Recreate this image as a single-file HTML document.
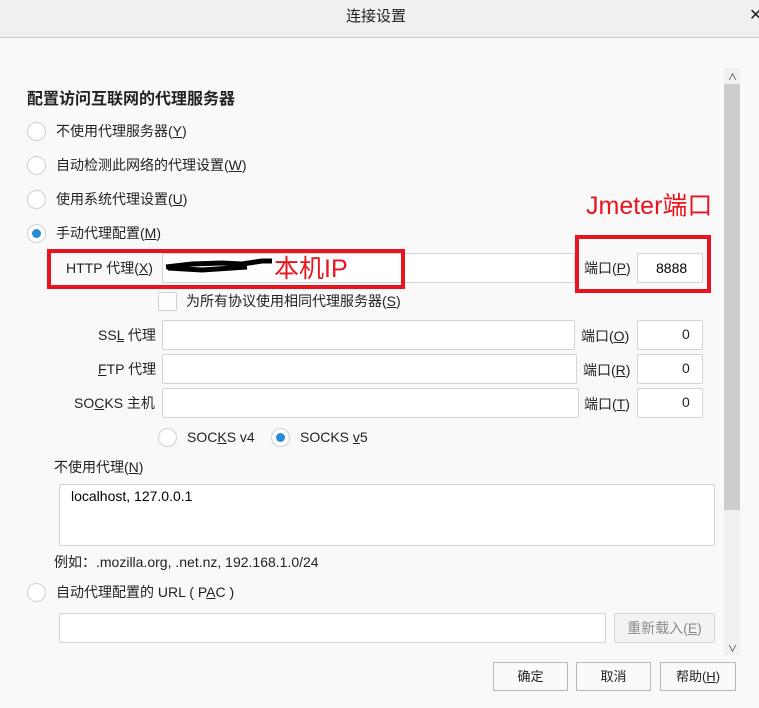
<!DOCTYPE html>
<html><head><meta charset="utf-8"><style>
*{box-sizing:border-box;margin:0;padding:0}
body{width:759px;height:708px;background:#f9f9fa;font-family:"Liberation Sans","Noto Sans CJK SC",sans-serif;font-size:14px;color:#222;position:relative;overflow:hidden}
.a{position:absolute;white-space:nowrap}
.title{left:0;top:0;width:759px;height:38px;background:#f0f0f0;border-bottom:1px solid #c8c8c8}
.r{position:absolute;width:19px;height:19px;border:1px solid #cfcfd8;border-radius:50%;background:#fff}
.r.on::after{content:"";position:absolute;left:4px;top:4px;width:9px;height:9px;border-radius:50%;background:#2a8ad4}
.in{position:absolute;background:#fff;border:1px solid #d4d4d8;border-radius:2px}
.t{position:absolute;white-space:nowrap;line-height:18px}
.red{position:absolute;border:4px solid #e8141e}
.btn{position:absolute;border:1px solid #b8b8b8;background:#fafafa;text-align:center;line-height:27px;font-size:13px}
u{text-decoration:underline}
</style></head><body>
<div class="a title"></div>
<div class="t" style="left:346px;top:8px;font-size:15px">连接设置</div>
<div class="t" style="left:749px;top:7px;font-size:16px">✕</div>

<div style="position:absolute;left:724px;top:68px;width:16px;height:587px;background:#f0f0f0"></div>
<div style="position:absolute;left:724px;top:84px;width:16px;height:426px;background:#cdcdcd"></div>
<div class="t" style="left:728px;top:68px;font-size:9px">∧</div>
<div class="t" style="left:728px;top:640px;font-size:9px">∨</div>

<div class="t" style="left:27px;top:91px;font-size:16px;font-weight:bold">配置访问互联网的代理服务器</div>

<div class="r" style="left:27px;top:122px"></div><div class="t" style="left:56px;top:122px">不使用代理服务器(<u>Y</u>)</div>
<div class="r" style="left:27px;top:156px"></div><div class="t" style="left:56px;top:156px">自动检测此网络的代理设置(<u>W</u>)</div>
<div class="r" style="left:27px;top:190px"></div><div class="t" style="left:56px;top:190px">使用系统代理设置(<u>U</u>)</div>
<div class="r on" style="left:27px;top:224px"></div><div class="t" style="left:56px;top:224px">手动代理配置(<u>M</u>)</div>

<div class="t" style="left:66px;top:259px">HTTP 代理(<u>X</u>)</div>
<div class="in" style="left:162px;top:253px;width:413px;height:30px"></div>
<svg class="a" style="left:162px;top:258px" width="115" height="20"><path d="M4 9 L30 6 L60 5 L80 6 L100 3 L110 3 M6 10 L40 12 L70 10 L85 9" stroke="#000" stroke-width="5" fill="none"/></svg>
<div class="t" style="left:274px;top:254px;font-size:25px;line-height:30px;color:#e8141e">本机IP</div>
<div class="red" style="left:47px;top:249px;width:358px;height:40px"></div>
<div class="t" style="left:584px;top:259px">端口(<u>P</u>)</div>
<div class="in" style="left:637px;top:253px;width:66px;height:30px"></div>
<div class="t" style="left:656px;top:259px;color:#000">8888</div>
<div class="red" style="left:575px;top:235px;width:136px;height:58px"></div>
<div class="t" style="left:586px;top:190px;font-size:25px;line-height:32px;color:#e8141e">Jmeter端口</div>

<div class="in" style="left:158px;top:292px;width:19px;height:19px;border-color:#cfcfd8"></div>
<div class="t" style="left:186px;top:292px">为所有协议使用相同代理服务器(<u>S</u>)</div>

<div class="t" style="left:98px;top:326px">SS<u>L</u> 代理</div>
<div class="in" style="left:162px;top:320px;width:413px;height:30px"></div>
<div class="t" style="left:581px;top:327px">端口(<u>O</u>)</div>
<div class="in" style="left:637px;top:320px;width:66px;height:30px"></div>
<div class="t" style="left:682px;top:325px">0</div>

<div class="t" style="left:98px;top:360px"><u>F</u>TP 代理</div>
<div class="in" style="left:162px;top:354px;width:415px;height:30px"></div>
<div class="t" style="left:583px;top:361px">端口(<u>R</u>)</div>
<div class="in" style="left:637px;top:354px;width:66px;height:30px"></div>
<div class="t" style="left:682px;top:359px">0</div>

<div class="t" style="left:74px;top:394px">SO<u>C</u>KS 主机</div>
<div class="in" style="left:162px;top:388px;width:417px;height:30px"></div>
<div class="t" style="left:584px;top:395px">端口(<u>T</u>)</div>
<div class="in" style="left:637px;top:388px;width:66px;height:30px"></div>
<div class="t" style="left:682px;top:393px">0</div>

<div class="r" style="left:158px;top:428px"></div><div class="t" style="left:187px;top:428px">SOC<u>K</u>S v4</div>
<div class="r on" style="left:271px;top:428px"></div><div class="t" style="left:300px;top:428px">SOCKS <u>v</u>5</div>

<div class="t" style="left:54px;top:458px">不使用代理(<u>N</u>)</div>
<div class="in" style="left:59px;top:484px;width:656px;height:62px"></div>
<div class="t" style="left:71px;top:487px;color:#000">localhost, 127.0.0.1</div>
<div class="t" style="left:54px;top:553px">例如：.mozilla.org, .net.nz, 192.168.1.0/24</div>

<div class="r" style="left:27px;top:583px"></div><div class="t" style="left:56px;top:583px">自动代理配置的 URL ( P<u>A</u>C )</div>
<div class="in" style="left:59px;top:613px;width:547px;height:30px"></div>
<div class="in" style="left:614px;top:613px;width:101px;height:30px;background:#f3f3f3;color:#8a8a8a;text-align:center;line-height:28px">重新载入(<u>E</u>)</div>

<div class="btn" style="left:493px;top:662px;width:75px;height:29px">确定</div>
<div class="btn" style="left:576px;top:662px;width:75px;height:29px">取消</div>
<div class="btn" style="left:660px;top:662px;width:76px;height:29px">帮助(<u>H</u>)</div>
</body></html>
